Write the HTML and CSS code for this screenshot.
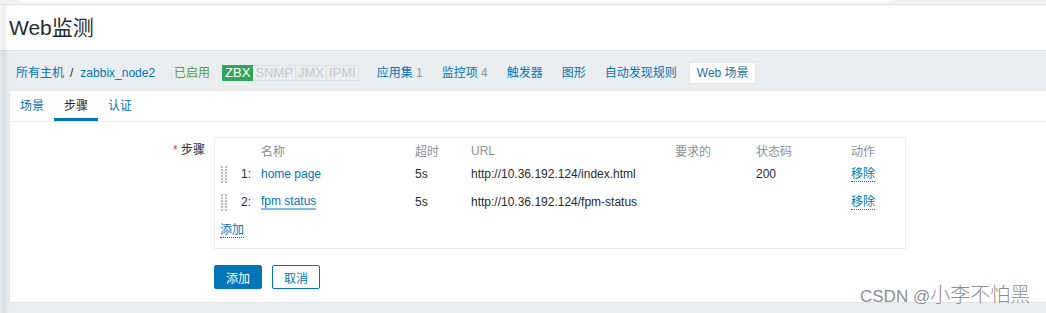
FILE: index.html
```html
<!DOCTYPE html>
<html lang="zh">
<head>
<meta charset="utf-8">
<title>Web监测</title>
<link rel="stylesheet" href="styles.css">
</head>
<body>
<div class="page">
  <div class="topstrip"><div class="tabpiece"></div></div>
  <header class="header"><h1 class="title">Web监测</h1></header>
  <nav class="band">
    <a class="crumb" href="#">所有主机</a>
    <span class="sep">/</span>
    <a class="crumb" href="#">zabbix_node2</a>
    <span class="enabled">已启用</span>
    <span class="badges">
      <span class="badge on">ZBX</span><span class="badge">SNMP</span><span class="badge">JMX</span><span class="badge">IPMI</span>
    </span>
    <a class="navlink first" href="#">应用集 <span class="cnt">1</span></a>
    <a class="navlink" href="#">监控项 <span class="cnt">4</span></a>
    <a class="navlink" href="#">触发器</a>
    <a class="navlink" href="#">图形</a>
    <a class="navlink" href="#">自动发现规则</a>
    <span class="navcur">Web 场景</span>
  </nav>
  <main class="panel">
    <div class="tabs">
      <a class="tab" href="#">场景</a>
      <a class="tab active" href="#">步骤</a>
      <a class="tab" href="#">认证</a>
    </div>
    <div class="form">
      <div class="label"><span class="req">*</span> 步骤</div>
      <div class="field">
        <div class="steps">
          <div class="cell hd"></div>
          <div class="cell hd"></div>
          <div class="cell hd">名称</div>
          <div class="cell hd">超时</div>
          <div class="cell hd">URL</div>
          <div class="cell hd">要求的</div>
          <div class="cell hd">状态码</div>
          <div class="cell hd">动作</div>

          <div class="cell row"><span class="handle"></span></div>
          <div class="cell row num">1:</div>
          <div class="cell row"><a class="name" href="#">home page</a></div>
          <div class="cell row">5s</div>
          <div class="cell row">http://10.36.192.124/index.html</div>
          <div class="cell row"></div>
          <div class="cell row">200</div>
          <div class="cell row"><a class="dotted" href="#">移除</a></div>

          <div class="cell row"><span class="handle"></span></div>
          <div class="cell row num">2:</div>
          <div class="cell row"><a class="name focus" href="#">fpm status</a></div>
          <div class="cell row">5s</div>
          <div class="cell row">http://10.36.192.124/fpm-status</div>
          <div class="cell row"></div>
          <div class="cell row"></div>
          <div class="cell row"><a class="dotted" href="#">移除</a></div>

          <div class="cell row addrow"><a class="dotted" href="#">添加</a></div>
        </div>
        <div class="actions">
          <button class="btn primary" type="button">添加</button>
          <button class="btn" type="button">取消</button>
        </div>
      </div>
    </div>
  </main>
  <div class="watermark">CSDN @<span class="wm-cjk">小李不怕黑</span></div>
  <div class="leftshade"></div>
</div>
</body>
</html>
```

FILE: styles.css
```css
* { box-sizing: border-box; }
html, body { margin: 0; padding: 0; }
body {
  background: #ebeef0;
  font-family: "Liberation Sans", Arial, "Noto Sans CJK SC", sans-serif;
  font-size: 12px;
  color: #1f2c33;
  width: 1046px;
  height: 313px;
  overflow: hidden;
}
a { color: #0275b8; text-decoration: none; }

.page { position: relative; height: 313px; }

.topstrip {
  height: 5px;
  background: #f3f3f3;
  border-bottom: 1px solid #e2e2e2;
}
.tabpiece {
  margin-left: 20px;
  width: 870px;
  height: 2px;
  background: #ffffff;
  border-radius: 0 0 4px 4px;
}

.header {
  height: 45px;
  background: #ffffff;
  display: flex;
  align-items: center;
  padding-left: 9px;
}
.title {
  margin: 0;
  font-weight: normal;
  font-size: 21px;
  line-height: 24px;
  color: #1f2c33;
}

.band {
  height: 40px;
  border-top: 1px solid #dde1e4;
  display: flex;
  align-items: flex-start;
  padding: 11px 0 0 16px;
  line-height: 22px;
  white-space: nowrap;
}
.sep { margin: 0 7px 0 6px; color: #1f2c33; }
.enabled { margin-left: 19px; color: #5b9b2a; }
.badges {
  margin-left: 12px;
  margin-top: 3px;
  display: flex;
  line-height: 14px;
}
.badge {
  padding: 0 2px;
  border: 1px solid #dde1e4;
  border-left: none;
  background: #ebeef0;
  color: #c3c8cc;
  font-size: 13px;
}
.badge.on {
  background: #34a45c;
  border: 1px solid #34a45c;
  color: #ffffff;
}
.badge:last-child { border-radius: 0 2px 2px 0; }
.navlink { margin-left: 19px; }
.navlink.first { margin-left: 18px; }
.cnt { color: #8a969c; }
.navcur {
  margin-left: 12px;
  padding: 0 6px 0 7px;
  height: 22px;
  background: #ffffff;
  border: 1px solid #dfe4e7;
  line-height: 20px;
  color: #1f6fa6;
}

.panel {
  margin-left: 9px;
  height: 213px;
  background: #ffffff;
  border: 1px solid #dfe4e7;
  border-right: none;
}
.tabs {
  display: flex;
  height: 31px;
  border-bottom: 1px solid #ebeef0;
}
.tab {
  padding: 0 10px;
  line-height: 30px;
  height: 30px;
  color: #0275b8;
}
.tab.active {
  color: #1f2c33;
  border-bottom: 3px solid #0275b8;
  line-height: 30px;
}

.form {
  display: grid;
  grid-template-columns: 195px 692px;
  column-gap: 9px;
  padding-top: 15px;
}
.label {
  text-align: right;
  line-height: 24px;
  padding-top: 1px;
  color: #1f2c33;
}
.req { color: #e33734; }

.steps {
  width: 692px;
  border: 1px solid #ebeef0;
  padding: 3px 0 4px;
  display: grid;
  grid-template-columns: 21px 20px 154px 56px 204px 81px 95px 59px;
  grid-auto-rows: 28px;
  grid-template-rows: 19px;
}
.cell {
  padding: 0 5px;
  display: flex;
  align-items: center;
  white-space: nowrap;
}
.hd { color: #8a8f93; }
.num { justify-content: flex-end; }
.handle {
  display: block;
  margin-left: 1px;
  width: 6px;
  height: 17px;
  background:
    linear-gradient(#b7bbbf 2px, transparent 2px) 0 0 / 2px 3px repeat-y,
    linear-gradient(#b7bbbf 2px, transparent 2px) 4px 0 / 2px 3px repeat-y;
}
.name { color: #0275b8; line-height: 14px; }
.name.focus {
  border-bottom: 2px solid #86bbdc;
  padding-bottom: 0;
}
.dotted {
  color: #0275b8;
  border-bottom: 1px dotted #0275b8;
  line-height: 14px;
}
.addrow { grid-column: 1 / -1; }

.actions {
  display: flex;
  gap: 10px;
  margin-top: 16px;
}
.btn {
  height: 24px;
  width: 48px;
  padding: 0;
  font-family: "Liberation Sans", Arial, "Noto Sans CJK SC", sans-serif;
  font-size: 12px;
  border: 1px solid #0275b8;
  border-radius: 2px;
  background: #ffffff;
  color: #0275b8;
}
.btn.primary { background: #0275b8; color: #ffffff; }

.watermark {
  position: absolute;
  left: 860px;
  top: 284px;
  font-size: 17px;
  line-height: 20px;
  color: #8e8e8e;
  text-shadow: 0 0 1px #ffffff, 0 0 1px #ffffff;
  white-space: nowrap;
}
.wm-cjk { font-size: 20px; font-family: "Noto Sans CJK SC", sans-serif; font-weight: 300; }

.leftshade {
  position: absolute;
  left: 0;
  top: 5px;
  width: 9px;
  height: 308px;
  pointer-events: none;
  background: linear-gradient(to right, rgba(0,0,0,0.02), rgba(0,0,0,0.07) 40%, rgba(0,0,0,0));
}
```
